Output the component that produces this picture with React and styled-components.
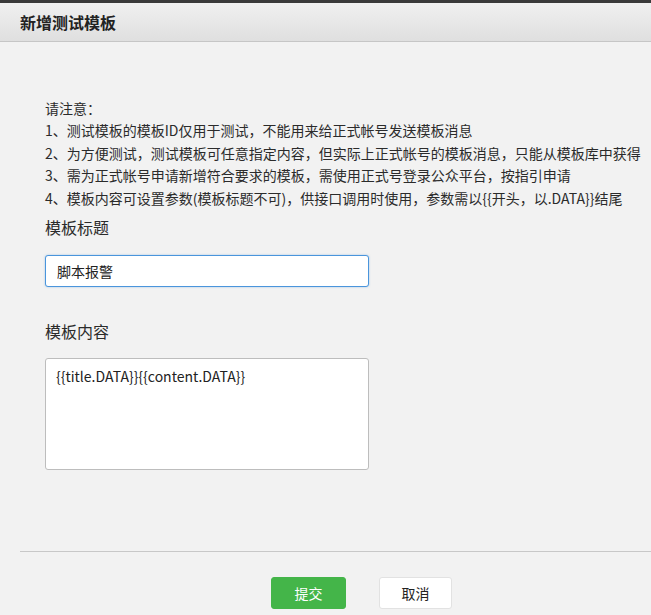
import React from "react";
import styled, { createGlobalStyle } from "styled-components";

const Global = createGlobalStyle`
  html, body { margin: 0; padding: 0; background: #f2f2f2; }
  body { font-family: "Noto Sans CJK SC", sans-serif; color: #333; }
  * { box-sizing: border-box; }
`;

const Page = styled.div`
  width: 651px;
  height: 615px;
  border-top: 3px solid #3a3a3a;
  background: #f2f2f2;
  overflow: hidden;
  display: flex;
  flex-direction: column;
`;

const Header = styled.div`
  height: 39px;
  display: flex;
  align-items: center;
  padding-left: 20px;
  background: linear-gradient(#f0f0f0, #dfdfdf);
  border-bottom: 1px solid #c6c6c6;
`;

const Title = styled.h1`
  margin: 0;
  font-size: 16px;
  font-weight: bold;
  color: #222;
  line-height: 22px;
`;

const Body = styled.div`
  padding: 55px 0 0 45px;
  display: flex;
  flex-direction: column;
`;

const Notice = styled.div`
  font-size: 14px;
  line-height: 22.4px;
  color: #2b2b2b;
  white-space: nowrap;
`;

const Label = styled.div`
  font-size: 16px;
  line-height: 22px;
  color: #2b2b2b;
  margin-top: ${(p) => p.$top}px;
`;

const TextInput = styled.input`
  display: block;
  width: 324px;
  height: 32px;
  margin-top: 17px;
  padding: 0 11px;
  border: 1px solid #4a95dc;
  border-radius: 3px;
  background: #fff;
  font-family: "Noto Sans CJK SC", sans-serif;
  font-size: 14px;
  color: #222;
  outline: none;
  box-shadow: 0 0 2px rgba(74, 149, 220, 0.5);
`;

const TextArea = styled.textarea`
  display: block;
  width: 324px;
  height: 112px;
  margin-top: 16px;
  padding: 6px 10px;
  border: 1px solid #bdbdbd;
  border-radius: 3px;
  background: #fff;
  font-family: "Noto Sans CJK SC", sans-serif;
  font-size: 14px;
  line-height: 22px;
  color: #222;
  resize: none;
  outline: none;
`;

const Divider = styled.hr`
  margin: 81px 0 0 20px;
  border: none;
  border-top: 1px solid #c8c8c8;
  height: 0;
`;

const Actions = styled.div`
  display: flex;
  gap: 33px;
  padding: 25px 0 0 271px;
`;

const Button = styled.button`
  width: ${(p) => (p.$primary ? 75 : 73)}px;
  height: 32px;
  border-radius: 3px;
  border: 1px solid ${(p) => (p.$primary ? "#44b549" : "#e2e2e2")};
  background: ${(p) => (p.$primary ? "#44b549" : "#fff")};
  color: ${(p) => (p.$primary ? "#fff" : "#222")};
  font-family: "Noto Sans CJK SC", sans-serif;
  font-size: 14px;
  padding: 0;
  cursor: pointer;
`;

const notes = [
  "请注意：",
  "1、测试模板的模板ID仅用于测试，不能用来给正式帐号发送模板消息",
  "2、为方便测试，测试模板可任意指定内容，但实际上正式帐号的模板消息，只能从模板库中获得",
  "3、需为正式帐号申请新增符合要求的模板，需使用正式号登录公众平台，按指引申请",
  "4、模板内容可设置参数(模板标题不可)，供接口调用时使用，参数需以{{开头，以.DATA}}结尾",
];

export default function App() {
  return (
    <>
      <Global />
      <Page>
        <Header>
          <Title>新增测试模板</Title>
        </Header>
        <Body>
          <Notice>
            {notes.map((n) => (
              <div key={n}>{n}</div>
            ))}
          </Notice>
          <Label $top={7}>模板标题</Label>
          <TextInput defaultValue="脚本报警" autoFocus />
          <Label $top={33}>模板内容</Label>
          <TextArea defaultValue="{{title.DATA}}{{content.DATA}}" />
        </Body>
        <Divider />
        <Actions>
          <Button $primary>提交</Button>
          <Button>取消</Button>
        </Actions>
      </Page>
    </>
  );
}
